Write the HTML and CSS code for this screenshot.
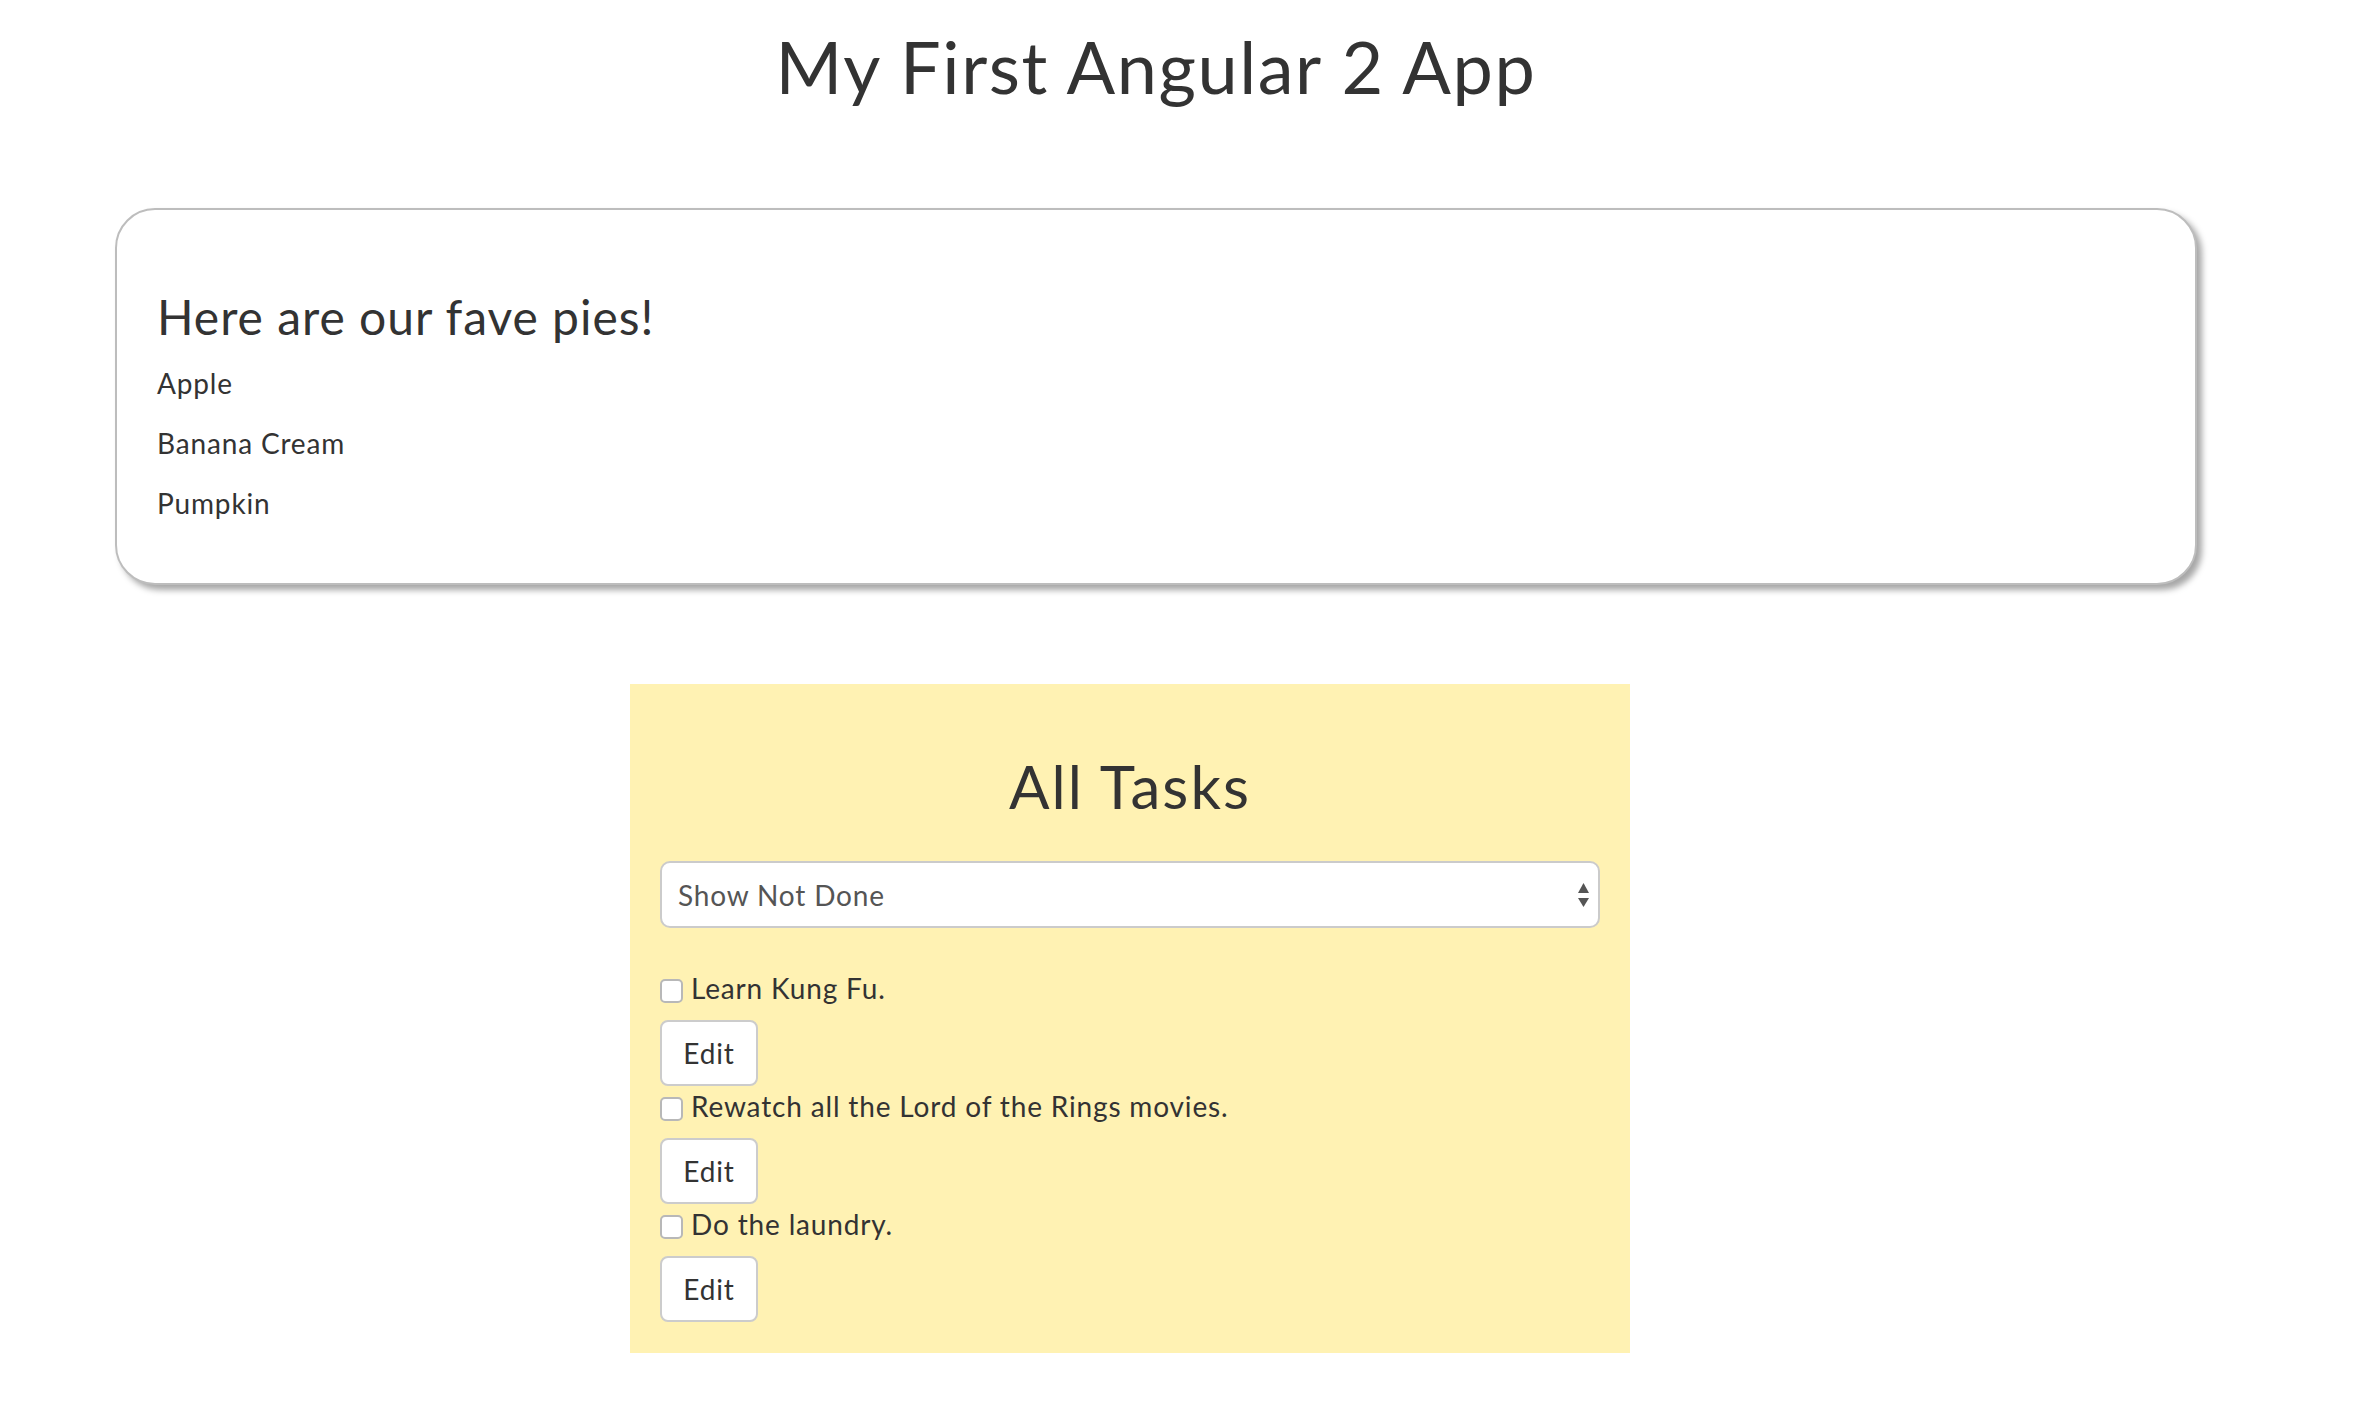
FILE: index.html
```html
<!DOCTYPE html>
<html lang="en">
<head>
<meta charset="utf-8">
<title>My First Angular 2 App</title>
<link rel="stylesheet" href="styles.css">
</head>
<body>
<div class="page">
  <h1 class="app-title">My First Angular 2 App</h1>
  <div class="pie-card">
    <h3 class="pie-title">Here are our fave pies!</h3>
    <p class="pie">Apple</p>
    <p class="pie">Banana Cream</p>
    <p class="pie">Pumpkin</p>
  </div>
  <div class="tasks">
    <h2 class="tasks-title">All Tasks</h2>
    <div class="filter-select">
      <span class="filter-value">Show Not Done</span>
      <svg class="filter-arrows" width="11" height="24" viewBox="0 0 11 24">
        <polygon points="5.5,0 11,10 0,10" fill="#555"/>
        <polygon points="0,15 11,15 5.5,24" fill="#555"/>
      </svg>
    </div>
    <div class="task-list">
      <div class="task">
        <label class="task-label"><span class="check"></span>Learn Kung Fu.</label>
        <button class="edit-btn">Edit</button>
      </div>
      <div class="task">
        <label class="task-label"><span class="check"></span>Rewatch all the Lord of the Rings movies.</label>
        <button class="edit-btn">Edit</button>
      </div>
      <div class="task">
        <label class="task-label"><span class="check"></span>Do the laundry.</label>
        <button class="edit-btn">Edit</button>
      </div>
    </div>
  </div>
</div>
</body>
</html>
```

FILE: styles.css
```css
html, body {
  margin: 0;
  padding: 0;
  background: #fff;
}
body {
  font-family: Lato, "Open Sans", sans-serif;
  color: #333;
  font-size: 28px;
  line-height: 40px;
  letter-spacing: 0.03em;
}
.page {
  margin-left: 115px;
  width: 2082px;
  padding-top: 1px;
  padding-bottom: 70px;
}
.app-title {
  margin: 26px 0 0;
  font-size: 72px;
  line-height: 79px;
  font-weight: 400;
  letter-spacing: 0.022em;
  text-align: center;
}
.pie-card {
  margin-top: 102px;
  border: 2px solid #bdbdbd;
  border-radius: 40px;
  padding: 40px;
  box-shadow: 5px 5px 6px rgba(0, 0, 0, 0.35);
  background: #fff;
}
.pie-title {
  margin: 40px 0 20px;
  font-size: 48px;
  line-height: 53px;
  font-weight: 400;
  letter-spacing: 0.02em;
}
.pie {
  margin: 0 0 20px;
}
.tasks {
  margin-top: 99px;
  margin-left: 515px;
  width: 1000px;
  box-sizing: border-box;
  padding: 30px 30px 31px;
  background: #fff2b3;
}
.tasks-title {
  margin: 39px 0 42px;
  font-size: 60px;
  line-height: 66px;
  font-weight: 400;
  letter-spacing: 0.035em;
  text-align: center;
}
.filter-select {
  display: flex;
  align-items: center;
  justify-content: space-between;
  box-sizing: border-box;
  height: 67px;
  padding: 0 9px 0 16px;
  background: #fff;
  border: 2px solid #cbcbcb;
  border-radius: 10px;
  color: #555;
}
.filter-arrows {
  display: block;
}
.task-list {
  margin-top: 40px;
}
.task-label {
  display: flex;
  align-items: center;
  margin-bottom: 12px;
  height: 40px;
}
.check {
  display: inline-block;
  box-sizing: border-box;
  width: 23px;
  height: 24px;
  margin: 5px 8px 0 0;
  background: #fff;
  border: 2px solid #b8b8b8;
  border-radius: 5px;
}
.edit-btn {
  display: block;
  box-sizing: border-box;
  width: 98px;
  height: 66px;
  padding: 0;
  margin: 0;
  background: #fff;
  border: 2px solid #cccccc;
  border-radius: 8px;
  font-family: inherit;
  font-size: 28px;
  letter-spacing: 0.03em;
  color: #333;
}
```
